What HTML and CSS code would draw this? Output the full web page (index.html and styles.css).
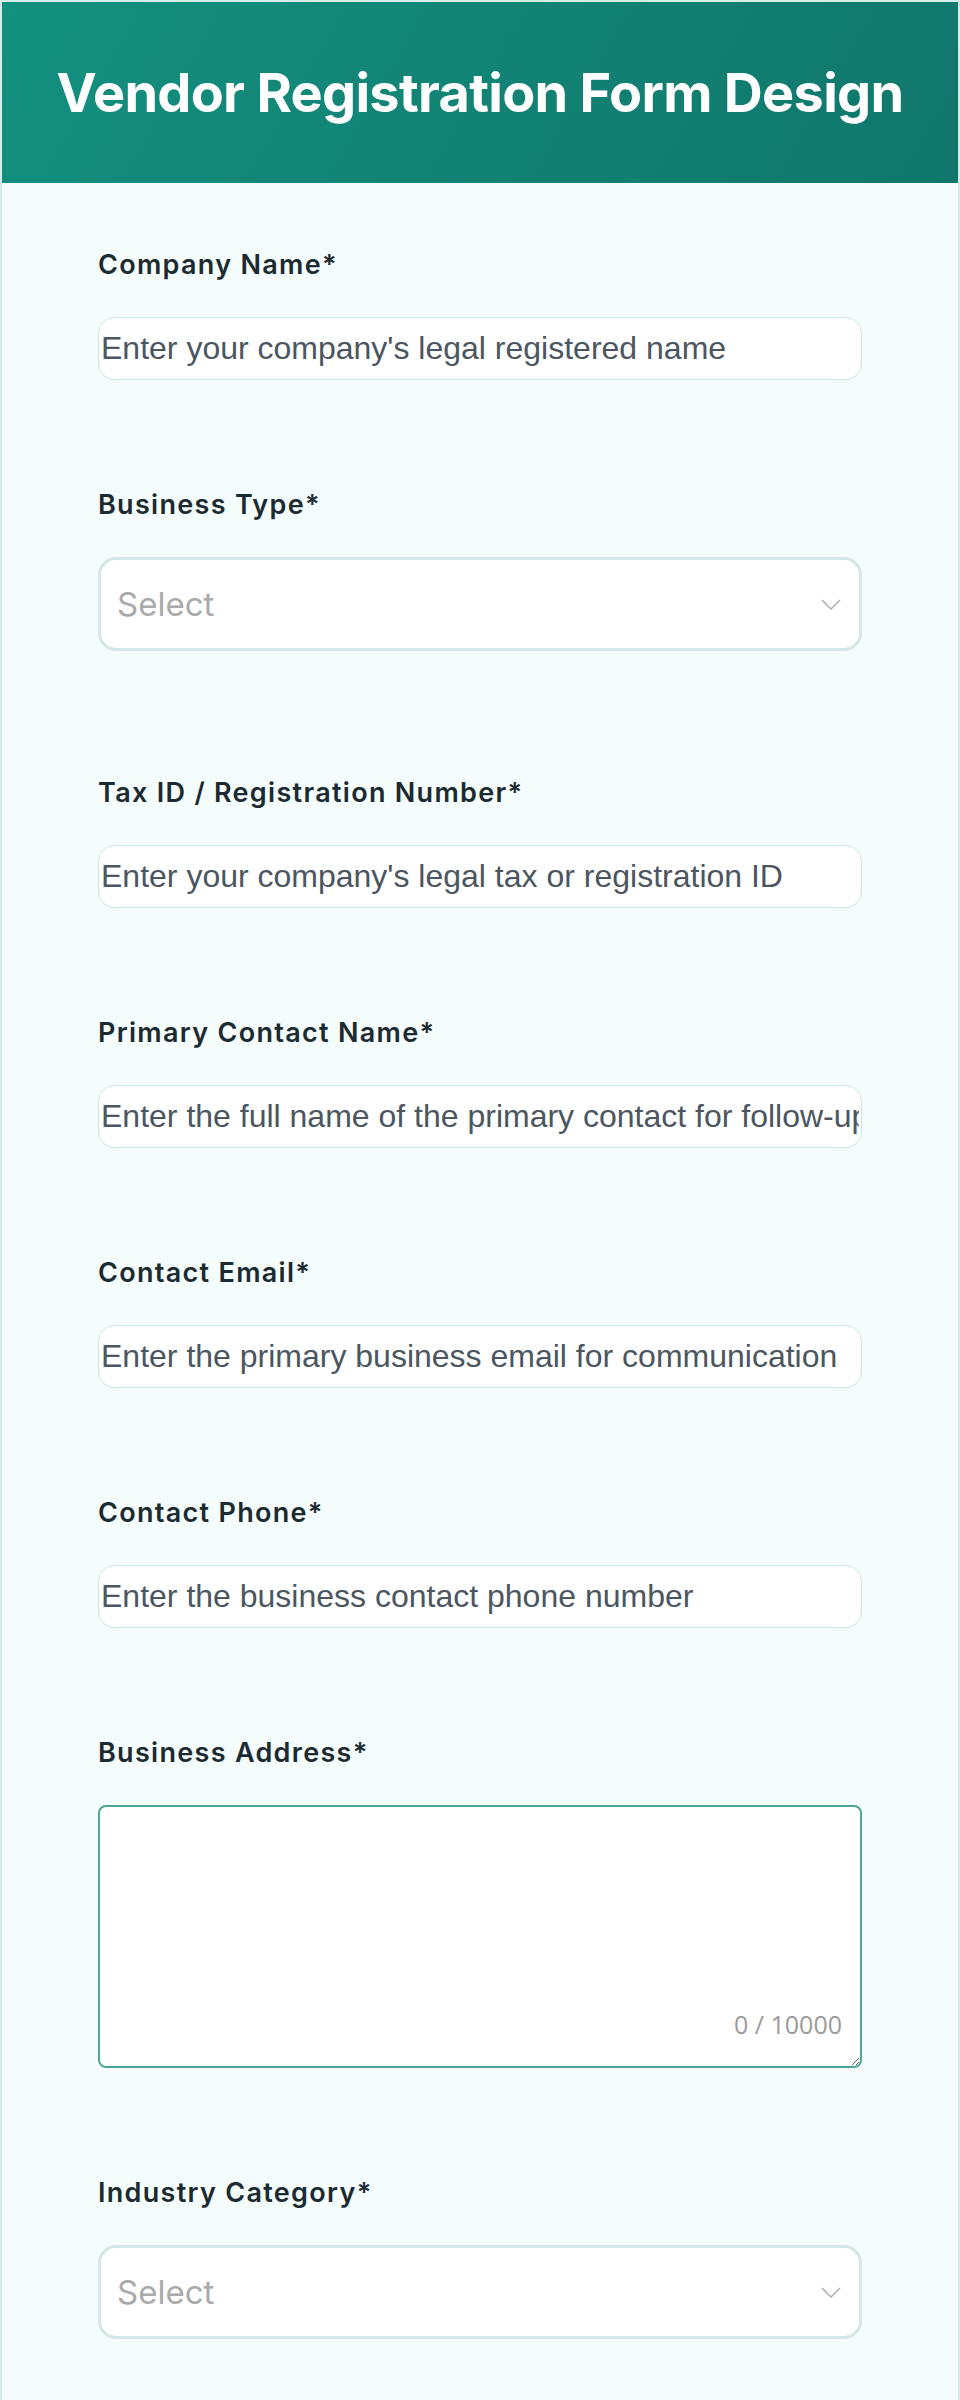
FILE: index.html
```html
<!DOCTYPE html>
<html lang="en">
<head>
    <meta charset="UTF-8">
    <meta name="viewport" content="width=device-width, initial-scale=1.0">
    <title>Vendor Registration Form Design</title>
    <link rel="stylesheet" href="styles.css">
</head>
<body>
    <div class="page">
        <div class="header">
            <h1>Vendor Registration Form Design</h1>
        </div>

        <form class="form">
            <div class="field">
                <label for="company">Company Name*</label>
                <input type="text" id="company" placeholder="Enter your company's legal registered name">
            </div>

            <div class="field field-select">
                <label for="business-type">Business Type*</label>
                <div class="select-wrap">
                    <select id="business-type">
                        <option value="" selected disabled>Select</option>
                        <option>Sole Proprietorship</option>
                        <option>Partnership</option>
                        <option>Corporation</option>
                        <option>LLC</option>
                    </select>
                    <svg class="chevron" width="20" height="11" viewBox="0 0 20 11"><path d="M1 1l9 9 9-9" fill="none" stroke="#a9a9a9" stroke-width="1.4"/></svg>
                </div>
            </div>

            <div class="field">
                <label for="tax-id">Tax ID / Registration Number*</label>
                <input type="text" id="tax-id" placeholder="Enter your company's legal tax or registration ID">
            </div>

            <div class="field">
                <label for="contact-name">Primary Contact Name*</label>
                <input type="text" id="contact-name" placeholder="Enter the full name of the primary contact for follow-up">
            </div>

            <div class="field">
                <label for="contact-email">Contact Email*</label>
                <input type="text" id="contact-email" placeholder="Enter the primary business email for communication">
            </div>

            <div class="field">
                <label for="contact-phone">Contact Phone*</label>
                <input type="text" id="contact-phone" placeholder="Enter the business contact phone number">
            </div>

            <div class="field">
                <label for="address">Business Address*</label>
                <div class="textarea-wrap">
                    <textarea id="address" maxlength="10000"></textarea>
                    <span class="counter">0 / 10000</span>
                </div>
            </div>

            <div class="field field-select">
                <label for="industry">Industry Category*</label>
                <div class="select-wrap">
                    <select id="industry">
                        <option value="" selected disabled>Select</option>
                        <option>Manufacturing</option>
                        <option>Retail</option>
                        <option>Technology</option>
                        <option>Services</option>
                    </select>
                    <svg class="chevron" width="20" height="11" viewBox="0 0 20 11"><path d="M1 1l9 9 9-9" fill="none" stroke="#a9a9a9" stroke-width="1.4"/></svg>
                </div>
            </div>
        </form>
    </div>
</body>
</html>
```

FILE: styles.css
```css
body {
    margin: 0;
    font-family: Inter, 'Noto Sans', sans-serif;
    background-color: #ffffff;
}
.page {
    border: 2px solid #d6eeea;
    background-color: #f5fcfc;
    min-height: 2500px;
}
.header {
    height: 181px;
    display: flex;
    align-items: center;
    justify-content: center;
    background: linear-gradient(120deg, #13907f, #10766b);
}
.header h1 {
    margin: 0;
    color: #ffffff;
    font-family: Inter, sans-serif;
    font-size: 54px;
    font-weight: 700;
    letter-spacing: -0.7px;
}
.form {
    padding: 64px 96px;
}
.field {
    margin-bottom: 107px;
}
.field-select {
    margin-bottom: 124px;
}
label {
    display: block;
    font-family: Inter, sans-serif;
    font-size: 27px;
    line-height: 36px;
    font-weight: 600;
    letter-spacing: 1.3px;
    color: #1c2a32;
    margin-bottom: 34px;
}
input {
    display: block;
    box-sizing: border-box;
    width: 100%;
    height: 63px;
    padding: 0 2px;
    border: 1.5px solid #cae6e1;
    border-radius: 16px;
    background-color: #ffffff;
    font-family: 'Liberation Sans', Arial, sans-serif;
    font-size: 32px;
    color: #1c2a32;
    outline: none;
}
input::placeholder {
    color: #4b5660;
}
.select-wrap {
    position: relative;
}
select {
    display: block;
    box-sizing: border-box;
    width: 100%;
    height: 94px;
    padding: 0 60px 0 16px;
    border: 3px solid #d6e7e7;
    border-radius: 18px;
    background-color: #ffffff;
    font-family: Inter, sans-serif;
    font-size: 33px;
    color: #aaaaaa;
    appearance: none;
    -webkit-appearance: none;
    outline: none;
}
.chevron {
    position: absolute;
    right: 21px;
    top: 42px;
    pointer-events: none;
}
.textarea-wrap {
    position: relative;
}
textarea {
    display: block;
    box-sizing: border-box;
    width: 100%;
    height: 263px;
    padding: 12px 16px;
    border: 2px solid #4ea59c;
    border-radius: 8px;
    background-color: #ffffff;
    font-family: 'Liberation Sans', Arial, sans-serif;
    font-size: 28px;
    resize: vertical;
    outline: none;
}
.counter {
    position: absolute;
    right: 20px;
    bottom: 27px;
    font-family: 'Open Sans', sans-serif;
    font-size: 25px;
    color: #9a9a9a;
}
```
